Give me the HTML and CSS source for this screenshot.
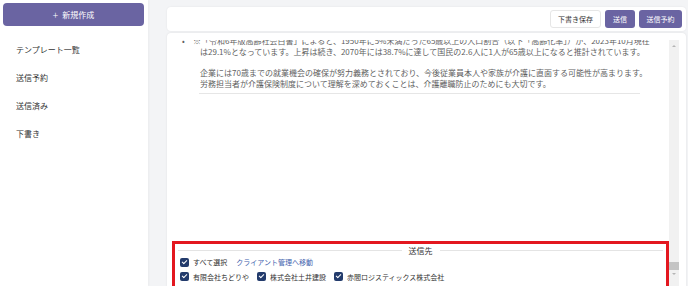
FILE: index.html
```html
<!DOCTYPE html>
<html lang="ja">
  <head>
    <meta charset="UTF-8" />
    <meta name="viewport" content="width=device-width, initial-scale=1.0" />
    <title>メール作成</title>
    <link rel="stylesheet" href="styles.css">
  </head>
  <body>
    <div class="app">
      <aside class="sidebar">
        <button class="new-btn"><span class="plus">+</span>新規作成</button>
        <ul class="menu">
          <li>テンプレート一覧</li>
          <li>送信予約</li>
          <li>送信済み</li>
          <li>下書き</li>
        </ul>
      </aside>

      <main class="main">
        <div class="toolbar">
          <button class="btn btn-light">下書き保存</button>
          <button class="btn btn-primary btn-send">送信</button>
          <button class="btn btn-primary btn-schedule">送信予約</button>
        </div>

        <div class="editor">
          <div class="pane">
            <div class="mail">
              <p>
                <span class="cut"><span class="dot">•</span>※「令和6年版高齢社会白書」によると、1950年に5%未満だった65歳以上の人口割合（以下「高齢化率」）が、2023年10月現在</span>
                <span class="line">は29.1%となっています。上昇は続き、2070年には38.7%に達して国民の2.6人に1人が65歳以上になると推計されています。</span>
              </p>
              <p>
                <span class="line">企業には70歳までの就業機会の確保が努力義務とされており、今後従業員本人や家族が介護に直面する可能性が高まります。</span>
                <span class="line">労務担当者が介護保険制度について理解を深めておくことは、介護離職防止のためにも大切です。</span>
              </p>
              <hr class="rule" />
            </div>

            <!-- 送信先 -->
            <section class="recipients">
              <div class="legend"><span>送信先</span></div>
              <div class="row">
                <label class="check"><span class="box"></span>すべて選択</label>
                <a class="link" href="#">クライアント管理へ移動</a>
              </div>
              <div class="row">
                <label class="check"><span class="box"></span>有限会社ちどりや</label>
                <label class="check"><span class="box"></span>株式会社土井建設</label>
                <label class="check"><span class="box"></span>赤間ロジスティックス株式会社</label>
              </div>
            </section>
          </div>

          <div class="scrollbar">
            <div class="sb-up"></div>
            <div class="sb-track"></div>
            <div class="sb-thumb"></div>
            <div class="sb-down"></div>
          </div>
        </div>
      </main>
    </div>
  </body>
</html>
```

FILE: styles.css
```css
body {
  margin: 0;
  padding: 0;
  font-family: "Noto Sans CJK JP", "Noto Sans", sans-serif;
  background-color: #f3f4f6;
  color: #333;
  overflow: hidden;
}

.app {
  display: flex;
  height: 100vh;
}

.sidebar {
  width: 148px;
  box-sizing: border-box;
  padding: 3px 4px 0 3px;
  background-color: #fff;
  box-shadow: 1px 0 2px rgba(0, 0, 0, 0.04);
}

.new-btn {
  width: 141px;
  height: 23px;
  border: none;
  border-radius: 4px;
  background-color: #6a64a2;
  color: #fff;
  font-family: inherit;
  font-size: 8px;
  display: flex;
  align-items: center;
  justify-content: center;
  padding: 0;
}

.plus {
  font-size: 10px;
  font-weight: 300;
  margin-right: 4px;
}

.menu {
  list-style: none;
  margin: 10px 0 0;
  padding: 0;
}

.menu li {
  height: 28px;
  line-height: 28px;
  padding-left: 13px;
  font-size: 8px;
  color: #333;
}

.main {
  flex: 1;
  display: flex;
  flex-direction: column;
  padding: 7px 2px 0 19px;
  min-width: 0;
}

.toolbar {
  height: 24px;
  display: flex;
  align-items: center;
  justify-content: flex-end;
  gap: 4px;
  padding-right: 4px;
  background-color: #fff;
  border-radius: 4px;
  box-shadow: 0 0 2px rgba(0, 0, 0, 0.08);
}

.btn {
  height: 18px;
  border-radius: 3px;
  font-family: inherit;
  font-size: 7px;
  padding: 0;
  border: 1px solid transparent;
  box-sizing: border-box;
  white-space: nowrap;
  text-align: center;
}

.btn-light {
  width: 51px;
  background-color: #fff;
  border-color: #e6e6e6;
  color: #333;
}

.btn-primary {
  background-color: #6a64a2;
  color: #fff;
}

.btn-send {
  width: 30px;
}

.btn-schedule {
  width: 43px;
}

.editor {
  flex: 1;
  display: flex;
  margin-top: 2px;
  padding: 7px 7px 0 5px;
  background-color: #fff;
  border-radius: 4px 4px 0 0;
  box-shadow: 0 0 2px rgba(0, 0, 0, 0.1);
  min-height: 0;
}

.pane {
  flex: 1;
  display: flex;
  flex-direction: column;
  overflow: hidden;
}

.mail {
  margin-top: -5px;
  padding-left: 28px;
  font-size: 8px;
  line-height: 11px;
  color: #5f5f5f;
}

.mail p {
  margin: 0 0 10px;
  white-space: nowrap;
}

.line,
.cut {
  display: block;
}

.cut {
  margin-left: -18px;
}

.dot {
  display: inline-block;
  width: 11px;
}

.rule {
  width: 441px;
  margin: -6px 0 0 -1px;
  border: none;
  border-top: 1px solid #e6e6e6;
}

.recipients {
  margin-top: auto;
  height: 45px;
  box-sizing: border-box;
  border: 3px solid #e3171f;
  border-bottom: none;
  padding: 0 3px;
  font-size: 7px;
  color: #333;
}

.legend {
  display: flex;
  align-items: center;
  gap: 7px;
  height: 10px;
  margin-top: 1px;
  font-size: 8px;
}

.legend::before,
.legend::after {
  content: "";
  flex: 1;
  border-top: 1px solid #e4e4e4;
}

.row {
  display: flex;
  align-items: center;
  height: 14px;
  padding-left: 2px;
  gap: 8px;
}

.row + .row {
  height: 15px;
}

.check {
  display: flex;
  align-items: center;
  gap: 4px;
}

.box {
  width: 9px;
  height: 9px;
  border-radius: 2px;
  background-color: #233b6c;
  position: relative;
}

.box::after {
  content: "";
  position: absolute;
  left: 3px;
  top: 1px;
  width: 2px;
  height: 4px;
  border: solid #fff;
  border-width: 0 1px 1px 0;
  transform: rotate(45deg);
}

.link {
  margin-left: 1px;
  color: #3f5fae;
  text-decoration: none;
}

.scrollbar {
  width: 10px;
  display: flex;
  flex-direction: column;
  background-color: #f1f1f1;
  padding-bottom: 8px;
}

.sb-up,
.sb-down {
  display: flex;
  align-items: center;
  justify-content: center;
}

.sb-up {
  height: 11px;
}

.sb-down {
  height: 8px;
}

.sb-up::before,
.sb-down::before {
  content: "";
  border-left: 2px solid transparent;
  border-right: 2px solid transparent;
}

.sb-up::before {
  border-bottom: 2px solid #b5b5b5;
}

.sb-down::before {
  border-top: 2px solid #b5b5b5;
}

.sb-track {
  flex: 1;
}

.sb-thumb {
  height: 8px;
  background-color: #c4c4c4;
}
```
